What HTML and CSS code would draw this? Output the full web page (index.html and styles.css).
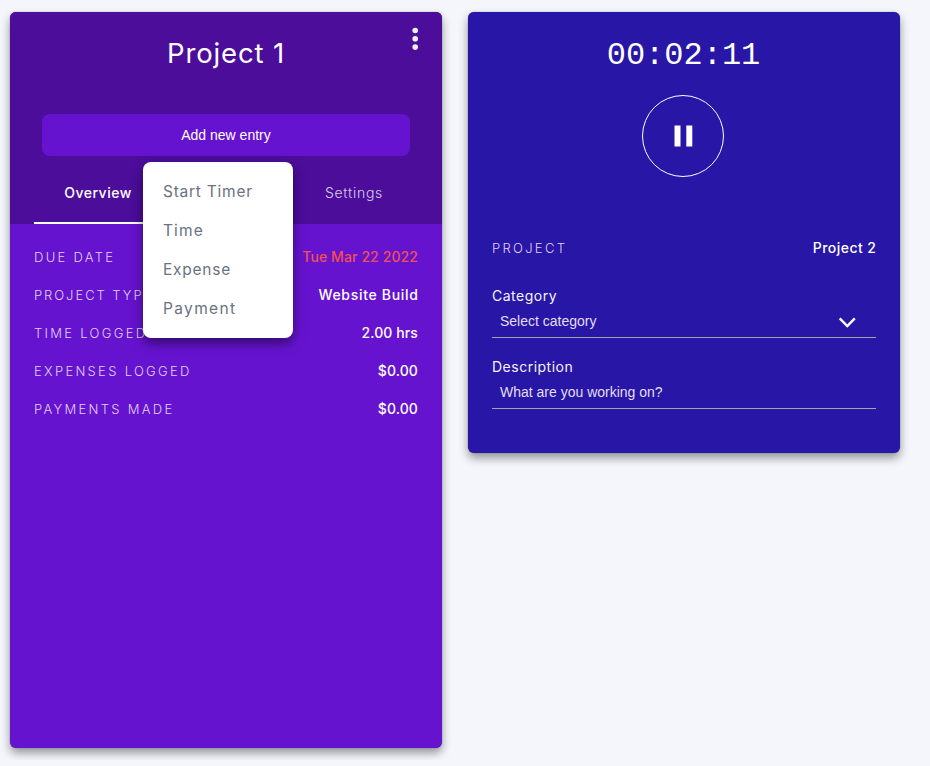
FILE: index.html
```html
<!DOCTYPE html>
<html lang="en">
<head>
<meta charset="utf-8">
<title>Projects</title>
<link rel="stylesheet" href="styles.css">
</head>
<body>
<main class="board">
  <section class="card project">
    <header class="project-head">
      <h1 class="title">Project 1</h1>
      <button class="more" aria-label="More"><svg width="8" height="24" viewBox="0 0 8 24"><circle cx="4.2" cy="3.5" r="2.8"/><circle cx="4.2" cy="11.8" r="2.8"/><circle cx="4.2" cy="20.1" r="2.8"/></svg></button>
      <div class="entry">
        <button class="add">Add new entry</button>
        <ul class="menu">
          <li class="m1">Start Timer</li>
          <li class="m2">Time</li>
          <li class="m3">Expense</li>
          <li class="m4">Payment</li>
        </ul>
      </div>
      <nav class="tabs">
        <a class="tab active">Overview</a>
        <a class="tab"></a>
        <a class="tab settings">Settings</a>
      </nav>
    </header>
    <dl class="details">
      <div class="row"><dt>DUE DATE</dt><dd class="due">Tue Mar 22 2022</dd></div>
      <div class="row"><dt class="type">PROJECT TYPE</dt><dd class="build">Website Build</dd></div>
      <div class="row"><dt>TIME LOGGED</dt><dd>2.00 hrs</dd></div>
      <div class="row"><dt>EXPENSES LOGGED</dt><dd>$0.00</dd></div>
      <div class="row"><dt>PAYMENTS MADE</dt><dd>$0.00</dd></div>
    </dl>
  </section>
  <section class="card timer">
    <div class="clock">00:02:11</div>
    <button class="pause" aria-label="Pause"><svg width="20" height="22" viewBox="0 0 20 22"><path d="M1.5.5h6v21h-6zM13.3.5h6v21h-6z"/></svg></button>
    <dl class="row current"><dt>PROJECT</dt><dd class="name">Project 2</dd></dl>
    <div class="field">
      <div class="label">Category</div>
      <div class="control"><span>Select category</span><svg class="chevron" width="18" height="12" viewBox="0 0 18 12"><path d="M1.7 2.3L9.3 10l7.5-7.7"/></svg></div>
    </div>
    <div class="field">
      <div class="label">Description</div>
      <div class="control"><span>What are you working on?</span></div>
    </div>
  </section>
</main>
</body>
</html>
```
FILE: styles.css
```css
* { box-sizing: border-box; }
body { margin: 0; background: #f4f6fb; font-family: Inter, sans-serif; color: #fff; font-size: 14px; }
h1, ul, dl, dd { margin: 0; padding: 0; }
button { border: 0; background: none; padding: 0; color: #fff; font: 14px "Liberation Sans", sans-serif; }
.board { display: flex; align-items: flex-start; gap: 26px; padding: 12px 10px; }
.card { width: 432px; border-radius: 6px; box-shadow: 0 0 1px rgba(0,0,0,.6), 0 5px 10px rgba(0,0,0,.4); }
.project { height: 736px; background: #6613d0; }
.project-head { position: relative; height: 212px; background: #4c0d9b; border-radius: 6px 6px 0 0; padding: 24px 24px 0; }
.title { font-size: 27.5px; line-height: 34px; font-weight: 400; letter-spacing: .85px; text-align: center; }
.more { position: absolute; top: 15px; right: 23px; }
.more svg { display: block; fill: #eee; }
.entry { position: relative; margin: 44px 8px 0; }
.add { display: block; width: 100%; height: 42px; border-radius: 8px; background: #6613d0; }
.menu { position: absolute; z-index: 2; top: 48px; left: 101px; width: 150px; height: 176px; padding: 10px 20px; border-radius: 8px; background: #fff; color: #6b7280; list-style: none; font-size: 15.5px; line-height: 39px; box-shadow: 0 5px 12px rgba(0,0,0,.5); }
.m1 { letter-spacing: .75px; }
.m2 { letter-spacing: 1.1px; }
.m3 { letter-spacing: .75px; }
.m4 { letter-spacing: 1.35px; }
.tabs { display: grid; grid-template-columns: repeat(3, 1fr); }
.tab { height: 68px; line-height: 74px; text-align: center; font-weight: 300; color: #dbcdea; }
.active { color: #fff; font-weight: 450; letter-spacing: .5px; border-bottom: 2px solid #fff; }
.settings { letter-spacing: .75px; }
.details { padding: 14px 24px; }
.row { display: flex; justify-content: space-between; height: 38px; line-height: 38px; white-space: nowrap; }
dt { font-weight: 300; font-size: 13px; color: #e0d0f5; letter-spacing: 2.3px; }
dd { font-weight: 450; letter-spacing: .1px; }
.type { letter-spacing: 1.95px; }
.due { color: #f25050; }
.build { letter-spacing: .7px; margin-right: -.7px; }
.name { letter-spacing: .45px; margin-right: -.45px; }
.timer { height: 441px; padding: 26px 24px 24px; background: #2816a6; }
.clock { text-align: center; text-indent: -1px; font: 32px/36px "Liberation Mono", monospace; }
.pause { display: flex; align-items: center; justify-content: center; width: 82px; height: 82px; margin: 21px auto 52px 150px; border: 1px solid #fff; border-radius: 50%; }
.pause svg { fill: #fff; }
.field { height: 71px; }
.current { margin-bottom: 19px; }
.label { line-height: 20px; letter-spacing: .5px; color: #f4f3fa; }
.control { display: flex; justify-content: space-between; align-items: center; height: 32px; padding: 0 20px 0 8px; border-bottom: 1px solid #a5a5a5; font: 14px "Liberation Sans", sans-serif; color: #e2dff2; }
.control span { padding-bottom: 2px; }
.chevron { fill: none; stroke: #fff; stroke-width: 2.4; }
```
